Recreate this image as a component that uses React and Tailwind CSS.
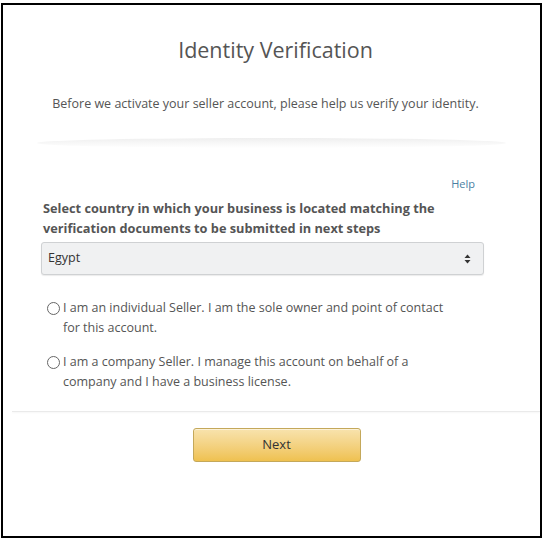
export default function App() {
  const font = { fontFamily: '"Open Sans", "Noto Sans", sans-serif' };
  return (
    <div className="w-[548px] h-[543px] bg-white pt-[3px] pl-[1px]" style={font}>
      <div className="w-[541px] h-[535px] border-2 border-black flex flex-col">
        <div className="h-[30px]" />
        <h1 className="text-center text-[21.5px] leading-[30px] text-[#555] pl-[8px]">Identity Verification</h1>
        <p className="mt-[30px] text-center text-[12.5px] leading-[18px] text-[#555] pr-[12px]">
          Before we activate your seller account, please help us verify your identity.
        </p>
        <div className="mt-[25px] mx-[34px] h-[10px] bg-gradient-to-b from-[#efefef] to-white rounded-[50%]" />
        <div className="pl-[38px] pr-[42px] pt-[29px]">
          <div className="flex justify-end pr-[23px]">
            <a className="text-[11px] leading-[14px] text-[#4a7fa3]">Help</a>
          </div>
          <p className="mt-[7px] text-[12.75px] leading-[20px] font-bold text-[#555] pl-[2px]">
            Select country in which your business is located matching the
            <br />
            verification documents to be submitted in next steps
          </p>
          <div className="mt-[4px] w-[443px] h-[33px] rounded-[3px] border border-[#cfd1d3] bg-[#f0f1f2] shadow-[0_1px_1px_rgba(0,0,0,0.08)] flex items-center justify-between pl-[6px] pr-[12px]">
            <span className="text-[12.5px] text-[#333]">Egypt</span>
            <svg width="7" height="10" viewBox="0 0 7 10">
              <path d="M0.5 4 L3.5 0.5 L6.5 4 Z" fill="#333" />
              <path d="M0.5 6 L3.5 9.5 L6.5 6 Z" fill="#333" />
            </svg>
          </div>
          <div className="mt-[23px] flex flex-col gap-[14px] pl-[6px]">
            <label className="flex items-start gap-[3px]">
              <span className="mt-[4px] w-[13px] h-[13px] rounded-full border border-[#666] shrink-0" />
              <span className="text-[12.5px] leading-[20px] text-[#555]">
                I am an individual Seller. I am the sole owner and point of contact
                <br />
                for this account.
              </span>
            </label>
            <label className="flex items-start gap-[3px]">
              <span className="mt-[4px] w-[13px] h-[13px] rounded-full border border-[#666] shrink-0" />
              <span className="text-[12.5px] leading-[20px] text-[#555]">
                I am a company Seller. I manage this account on behalf of a
                <br />
                company and I have a business license.
              </span>
            </label>
          </div>
        </div>
        <div className="mt-[19px] ml-[9px] h-[1px] bg-[#eaeaea] shadow-[0_1px_2px_rgba(0,0,0,0.05)]" />
        <div className="flex justify-center pt-[16px] pl-[10px]">
          <button className="w-[168px] h-[34px] rounded-[3px] border border-[#c4a85a] bg-gradient-to-b from-[#f8e3ad] to-[#efc14f] text-[13px] text-[#333] shadow-[0_1px_0_rgba(255,255,255,0.5)_inset]">
            Next
          </button>
        </div>
      </div>
    </div>
  );
}
